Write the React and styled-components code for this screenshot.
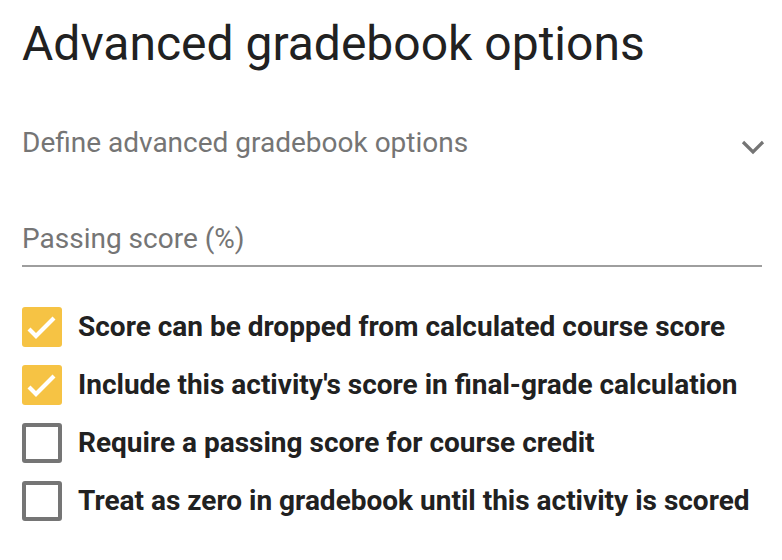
import styled, { createGlobalStyle } from "styled-components";

const GlobalStyle = createGlobalStyle`
    body {
        margin: 0;
        background: #ffffff;
        font-family: Roboto, "Noto Sans", sans-serif;
    }
`

const Pagina = styled.div`
    padding: 14px 20px 0 22px;
    color: #212121;
`

const Titulo = styled.h1`
    margin: 0;
    font-size: 48px;
    font-weight: 400;
    line-height: 60px;
    color: #212121;
`

const Acordeao = styled.div`
    display: flex;
    align-items: center;
    justify-content: space-between;
    margin-top: 51px;
`

const Subtitulo = styled.span`
    font-size: 28px;
    color: #757575;
    line-height: 36px;
`

const Seta = styled.svg`
    width: 24px;
    height: 16px;
    margin-right: -3px;
    margin-top: 8px;
`

const Campo = styled.div`
    margin-top: 62px;
    padding-bottom: 10px;
    border-bottom: 2px solid #9e9e9e;
    font-size: 28px;
    color: #757575;
    line-height: 32px;
`

const Lista = styled.div`
    display: flex;
    flex-direction: column;
    gap: 18px;
    margin-top: 40px;
`

const Linha = styled.label`
    display: flex;
    align-items: center;
    gap: 16px;
`

const Caixa = styled.span`
    box-sizing: border-box;
    width: 40px;
    height: 40px;
    border-radius: 3px;
    flex-shrink: 0;
    display: flex;
    align-items: center;
    justify-content: center;
    background: ${props => props.$marcado ? "#f6c344" : "#ffffff"};
    border: ${props => props.$marcado ? "none" : "4px solid #757575"};
`

const Rotulo = styled.span`
    font-size: 28px;
    font-weight: 700;
    color: #212121;
    line-height: 40px;
`

const opcoes = [
    { texto: "Score can be dropped from calculated course score", marcado: true },
    { texto: "Include this activity's score in final-grade calculation", marcado: true },
    { texto: "Require a passing score for course credit", marcado: false },
    { texto: "Treat as zero in gradebook until this activity is scored", marcado: false },
]

const App = () => {
    return (
        <Pagina>
            <GlobalStyle />
            <Titulo>Advanced gradebook options</Titulo>
            <Acordeao>
                <Subtitulo>Define advanced gradebook options</Subtitulo>
                <Seta viewBox="0 0 24 16">
                    <path d="M2 3 L12 13 L22 3" fill="none" stroke="#757575" strokeWidth="3.2" />
                </Seta>
            </Acordeao>
            <Campo>Passing score (%)</Campo>
            <Lista>
                {opcoes.map(opcao => (
                    <Linha key={opcao.texto}>
                        <Caixa $marcado={opcao.marcado}>
                            {opcao.marcado && (
                                <svg width="40" height="40" viewBox="0 0 40 40">
                                    <path d="M7 22 L14 29 L32 11" fill="none" stroke="#ffffff" strokeWidth="4.2" />
                                </svg>
                            )}
                        </Caixa>
                        <Rotulo>{opcao.texto}</Rotulo>
                    </Linha>
                ))}
            </Lista>
        </Pagina>
    )
}

export default App;
